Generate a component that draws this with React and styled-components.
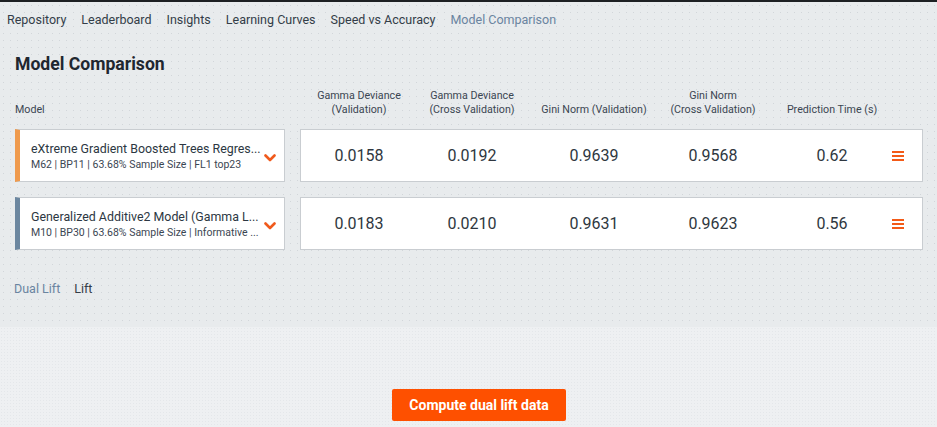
import React from 'react'
import styled, { createGlobalStyle } from 'styled-components'

const GlobalStyle = createGlobalStyle`
    body {
        margin: 0;
        font-family: Roboto, "Liberation Sans", sans-serif;
        background: #eef0f2;
    }
`

const COLS = '116px 110px 134px 104px 126px 1fr'

const Page = styled.div`
    border-top: 2px solid #1d2023;
    width: 937px;
    height: 425px;
    display: flex;
    flex-direction: column;
`
const Upper = styled.div`
    background-color: #e8ebed;
    background-image: radial-gradient(#d2d6da 0.6px, transparent 0.7px);
    background-size: 7px 7px;
    padding: 0 14px 30px 15px;
`
const Nav = styled.nav`
    display: flex;
    gap: 15px;
    padding: 10px 0 0 0;
    margin-left: -8px;
`
const Tab = styled.span`
    font-size: 12.5px;
    line-height: 16px;
    color: ${p => (p.active ? '#6a84a0' : '#333d48')};
`
const Title = styled.h2`
    margin: 26px 0 0;
    font-size: 17.6px;
    line-height: 20px;
    font-weight: 700;
    color: #1f2730;
`
const HeaderRow = styled.div`
    display: flex;
    margin-top: 15px;
    height: 28px;
`
const ModelHead = styled.div`
    width: 270px;
    align-self: flex-end;
    font-size: 10.7px;
    line-height: 14px;
    color: #3b4652;
`
const HeadGrid = styled.div`
    display: grid;
    grid-template-columns: ${COLS};
    margin-left: 16px;
    width: 622px;
`
const HeadCell = styled.div`
    align-self: end;
    text-align: center;
    font-size: 10.7px;
    line-height: 14px;
    color: #3b4652;
    padding-left: ${p => p.shift || 0}px;
`
const Rows = styled.div`
    display: flex;
    flex-direction: column;
    gap: 15px;
    margin-top: 12px;
`
const Row = styled.div`
    display: flex;
    gap: 15px;
    height: 53px;
`
const ModelCard = styled.div`
    box-sizing: border-box;
    width: 270px;
    background: #fff;
    border: 1px solid #c9cdd1;
    border-left: 5px solid ${p => p.accent};
    display: flex;
    align-items: center;
    padding: 0 8px 0 11px;
`
const ModelText = styled.div`
    flex: 1;
    min-width: 0;
`
const ModelName = styled.div`
    font-size: 12.4px;
    line-height: 17px;
    color: #2c3742;
    white-space: nowrap;
`
const ModelMeta = styled.div`
    font-size: 10.5px;
    line-height: 15px;
    color: #3b4652;
    white-space: nowrap;
`
const Chevron = styled.svg`
    flex: none;
    width: 12px;
    height: 8px;
    margin-top: 4px;
`
const ValueCard = styled.div`
    box-sizing: border-box;
    width: 623px;
    background: #fff;
    border: 1px solid #c9cdd1;
    display: grid;
    grid-template-columns: ${COLS};
    align-items: center;
`
const Value = styled.div`
    text-align: center;
    font-size: 16px;
    color: #2f3740;
    padding-left: ${p => p.shift || 0}px;
`
const Menu = styled.div`
    width: 12px;
    height: 10px;
    display: flex;
    flex-direction: column;
    justify-content: space-between;
    margin-left: 1px;
    span {
        display: block;
        height: 2px;
        background: #f35a17;
    }
`
const SubTabs = styled.div`
    display: flex;
    gap: 14px;
    margin-top: 31px;
    margin-left: -1px;
`
const Lower = styled.div`
    flex: 1;
    display: flex;
    justify-content: center;
    align-items: flex-start;
    padding: 62px 0 0 21px;
    background-color: #eef0f2;
    background-image: radial-gradient(#e4e7ea 0.7px, transparent 0.8px);
    background-size: 3px 3px;
`
const Compute = styled.button`
    width: 174px;
    height: 32px;
    border: none;
    border-radius: 2px;
    background: #fe5000;
    color: #fff;
    font-family: Roboto, "Liberation Sans", sans-serif;
    font-size: 14px;
    font-weight: 700;
    cursor: pointer;
`

const headers = [
    ['Gamma Deviance', '(Validation)'],
    ['Gamma Deviance', '(Cross Validation)'],
    ['Gini Norm (Validation)'],
    ['Gini Norm', '(Cross Validation)'],
    ['Prediction Time (s)'],
]

const models = [
    {
        name: 'eXtreme Gradient Boosted Trees Regres...',
        meta: 'M62 | BP11 | 63.68% Sample Size | FL1 top23',
        accent: '#ef9a4d',
        values: ['0.0158', '0.0192', '0.9639', '0.9568', '0.62'],
    },
    {
        name: 'Generalized Additive2 Model (Gamma L...',
        meta: 'M10 | BP30 | 63.68% Sample Size | Informative ...',
        accent: '#6c87a0',
        values: ['0.0183', '0.0210', '0.9631', '0.9623', '0.56'],
    },
]

const tabs = ['Repository', 'Leaderboard', 'Insights', 'Learning Curves', 'Speed vs Accuracy', 'Model Comparison']

export default function App() {
    return (
        <Page>
            <GlobalStyle />
            <Upper>
                <Nav>
                    {tabs.map(t => (
                        <Tab key={t} active={t === 'Model Comparison'}>{t}</Tab>
                    ))}
                </Nav>
                <Title>Model Comparison</Title>
                <HeaderRow>
                    <ModelHead>Model</ModelHead>
                    <HeadGrid>
                        {headers.map((h, i) => (
                            <HeadCell key={i} shift={i === 4 ? 8 : 0}>
                                {h.map(line => <div key={line}>{line}</div>)}
                            </HeadCell>
                        ))}
                    </HeadGrid>
                </HeaderRow>
                <Rows>
                    {models.map(m => (
                        <Row key={m.meta}>
                            <ModelCard accent={m.accent}>
                                <ModelText>
                                    <ModelName>{m.name}</ModelName>
                                    <ModelMeta>{m.meta}</ModelMeta>
                                </ModelText>
                                <Chevron viewBox="0 0 12 8">
                                    <polyline points="1.5,1.5 6,6 10.5,1.5" fill="none" stroke="#f05a1c" strokeWidth="2.6" strokeLinecap="round" strokeLinejoin="round" />
                                </Chevron>
                            </ModelCard>
                            <ValueCard>
                                {m.values.map((v, i) => (
                                    <Value key={i} shift={i === 4 ? 8 : 0}>{v}</Value>
                                ))}
                                <Menu><span /><span /><span /></Menu>
                            </ValueCard>
                        </Row>
                    ))}
                </Rows>
                <SubTabs>
                    <Tab active>Dual Lift</Tab>
                    <Tab>Lift</Tab>
                </SubTabs>
            </Upper>
            <Lower>
                <Compute>Compute dual lift data</Compute>
            </Lower>
        </Page>
    )
}
